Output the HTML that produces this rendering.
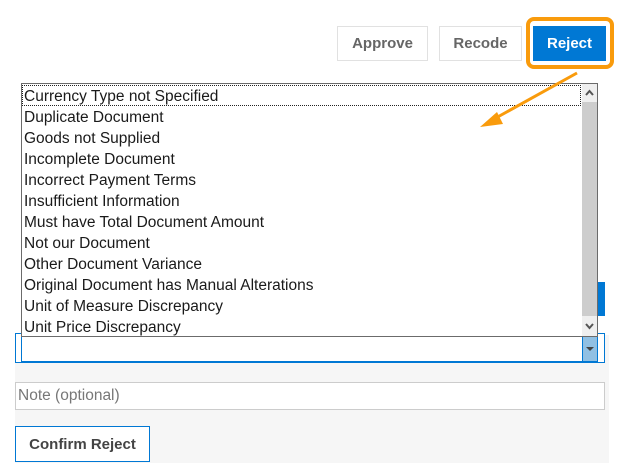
<!DOCTYPE html><html><head><style>
body{margin:0;width:621px;height:473px;background:#fff;position:relative;overflow:hidden;font-family:"Segoe UI","Liberation Sans",sans-serif}
.a{position:absolute;box-sizing:border-box}
.btn{border:1px solid #e1e1e1;background:#fff;color:#666;font-weight:bold;font-size:15px;display:flex;align-items:center;justify-content:center}
.list{left:21px;top:83px;width:577px;height:254px;border:1px solid #6b6b6b;background:#fff;z-index:5}
.it{position:absolute;left:2px;height:21px;line-height:21px;font-size:15.5px;color:#1a1a1a;white-space:nowrap}
</style></head><body>
<div class="a" style="left:15px;top:335px;width:594px;height:128px;background:#f6f6f6"></div>
<div class="a" style="left:598px;top:282px;width:7px;height:34px;background:#0078d4"></div>
<div class="a btn" style="left:337px;top:26px;width:91px;height:35px">Approve</div>
<div class="a btn" style="left:439px;top:26px;width:83px;height:35px">Recode</div>
<div class="a" style="left:526px;top:17px;width:88px;height:52px;border:4px solid #f99b0c;border-radius:8px"></div>
<div class="a btn" style="left:533px;top:26px;width:73px;height:35px;background:#0078d4;color:#fff;border-color:#0078d4">Reject</div>
<div class="a" style="left:15px;top:333px;width:590px;height:30px;border:1px solid #0078d4;background:#fff"></div>
<div class="a" style="left:21px;top:336px;width:577px;height:26px;border:1px solid #0078d4;border-top:none"></div>
<div class="a" style="left:582px;top:336px;width:16px;height:26px;background:#91c0e3;border:1px solid #0078d4;border-top:none"></div>
<div class="a" style="left:586px;top:347px;width:0;height:0;border:4px solid transparent;border-top:4px solid #444"></div>
<div class="a list">
<div class="a" style="left:0;top:1px;width:559px;height:21px;border:1px dotted #222"></div>
<div class="it" style="top:2px">Currency Type not Specified</div>
<div class="it" style="top:23px">Duplicate Document</div>
<div class="it" style="top:44px">Goods not Supplied</div>
<div class="it" style="top:65px">Incomplete Document</div>
<div class="it" style="top:86px">Incorrect Payment Terms</div>
<div class="it" style="top:107px">Insufficient Information</div>
<div class="it" style="top:128px">Must have Total Document Amount</div>
<div class="it" style="top:149px">Not our Document</div>
<div class="it" style="top:170px">Other Document Variance</div>
<div class="it" style="top:191px">Original Document has Manual Alterations</div>
<div class="it" style="top:212px">Unit of Measure Discrepancy</div>
<div class="it" style="top:233px">Unit Price Discrepancy</div>
<div class="a" style="left:560px;top:0;width:15px;height:252px;background:#efefef"></div>
<div class="a" style="left:560px;top:18px;width:15px;height:214px;background:#cdcdcd"></div>
<svg class="a" style="left:560px;top:0" width="15" height="252"><polyline points="4,11 7.5,7 11,11" fill="none" stroke="#555" stroke-width="2"/><polyline points="4,240 7.5,244 11,240" fill="none" stroke="#555" stroke-width="2"/></svg>
</div>
<div class="a" style="left:15px;top:382px;width:590px;height:28px;border:1px solid #ccc;background:#fff;font-size:15.5px;color:#777;line-height:26px;padding-left:2px">Note (optional)</div>
<div class="a" style="left:15px;top:426px;width:135px;height:36px;border:1px solid #0078d4;background:#fff;font-size:15px;font-weight:bold;color:#444;display:flex;align-items:center;justify-content:center">Confirm Reject</div>
<svg class="a" style="left:0;top:0;z-index:6" width="621" height="473"><line x1="577" y1="73" x2="494" y2="119" stroke="#f99b0c" stroke-width="3"/><polygon points="480,127 497,112 503,124" fill="#f99b0c"/></svg>
</body></html>
